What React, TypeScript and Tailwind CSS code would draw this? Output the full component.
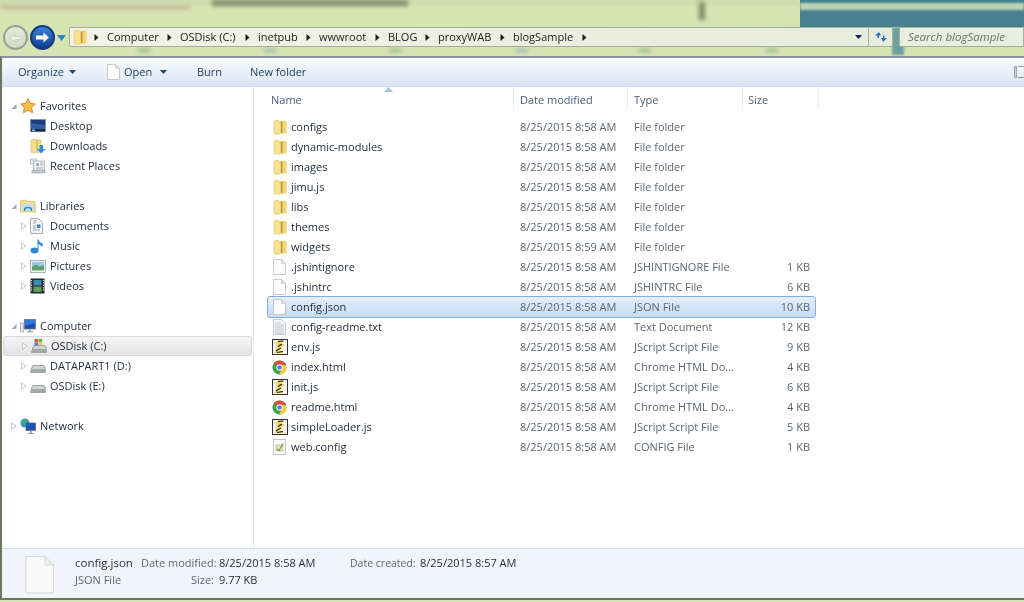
import React from 'react';

const FONT = "font-['Open_Sans',sans-serif]";

const FolderIcon = () => (
  <svg width="14" height="16" viewBox="0 0 14 16" className="shrink-0">
    <path d="M1 2 L4.5 1 L5 2 L12.5 2 Q13.5 2 13.5 3 L13.5 13.5 Q13.5 14.5 12.5 14.5 L7 14.5 L7 2.5 Z" fill="#eccb62" />
    <path d="M1 3 Q1 2 2 2 L5 1.2 L7.5 3.5 L8 13.5 Q8 15 6.5 15 L2 15 Q1 15 1 14 Z" fill="#f6e28f" stroke="#e0bc55" strokeWidth="0.5" />
    <path d="M8.7 3 L8.7 14" stroke="#b8923a" strokeWidth="1.2" />
    <path d="M10 3 L13 3 L13 14 L10 14 Z" fill="#f3d778" />
  </svg>
);

const FileIcon = ({ w = 13, h = 16 }: { w?: number; h?: number }) => (
  <svg width={w} height={h} viewBox="0 0 13 16" className="shrink-0">
    <path d="M0.5 0.5 L8.5 0.5 L12.5 4.5 L12.5 15.5 L0.5 15.5 Z" fill="#fdfdfd" stroke="#b5b5b5" strokeWidth="0.7" />
    <path d="M8.5 0.5 L8.5 4.5 L12.5 4.5 Z" fill="#e6e6e6" stroke="#b5b5b5" strokeWidth="0.5" />
  </svg>
);

const BigFileIcon = () => (
  <svg width="29" height="38" viewBox="0 0 29 38" className="shrink-0">
    <path d="M1 0.5 L20 0.5 L28.5 9 L28.5 37 L1 37 Z" fill="#f9f9f9" stroke="#d6d6d6" strokeWidth="1" />
    <path d="M20 0.5 L20 9 L28.5 9 Z" fill="#ececec" stroke="#cfcfcf" strokeWidth="0.7" />
  </svg>
);

const TextFileIcon = () => (
  <svg width="13" height="16" viewBox="0 0 13 16" className="shrink-0">
    <path d="M0.5 0.5 L8.5 0.5 L12.5 4.5 L12.5 15.5 L0.5 15.5 Z" fill="#f4f6f8" stroke="#b5b5b5" strokeWidth="0.7" />
    <path d="M2 4 H8 M2 6 H11 M2 8 H11 M2 10 H11 M2 12 H11 M2 14 H11" stroke="#b9c4d0" strokeWidth="0.9" />
  </svg>
);

const ScriptIcon = () => (
  <svg width="16" height="16" viewBox="0 0 16 16" className="shrink-0">
    <rect x="0.5" y="0.5" width="15" height="15" fill="#f5f5ee" stroke="#333" />
    <path d="M11 2.5 L6 3 L5.5 5 L10 6.5 L5 9 L4.5 13 L10.5 13" fill="none" stroke="#f2d94e" strokeWidth="2.6" />
    <path d="M11.5 2 L6 2.5 M10 5 L6 7.5 M9 9 L4 12 M11 12.5 L5 13.5" stroke="#1c1c1c" strokeWidth="1.2" />
  </svg>
);

const ChromeIcon = () => (
  <svg width="15" height="15" viewBox="0 0 16 16" className="shrink-0">
    <circle cx="8" cy="8" r="7.5" fill="#3ba64a" />
    <path d="M8 0.5 A7.5 7.5 0 0 1 15 6 L8 6 A2.5 2.5 0 0 0 5.5 7.5 L2.2 3.2 A7.5 7.5 0 0 1 8 0.5 Z" fill="#dd4b3e" />
    <path d="M15 5.5 A7.5 7.5 0 0 1 7.5 15.5 L10.5 9.5 L10 5.5 Z" fill="#f7cc3f" />
    <circle cx="8" cy="8" r="3.4" fill="#fff" />
    <circle cx="8" cy="8" r="2.5" fill="#4a84d8" />
  </svg>
);

const ConfigIcon = () => (
  <svg width="13" height="16" viewBox="0 0 13 16" className="shrink-0">
    <rect x="0.5" y="0.5" width="12" height="15" fill="#fafafa" stroke="#b0b0b0" strokeWidth="0.7" />
    <rect x="3" y="6" width="7" height="6" fill="#e8e4b8" stroke="#9a9a80" strokeWidth="0.5" />
    <path d="M4 10 L6 11.5 L10 4.5" fill="none" stroke="#6aa53c" strokeWidth="1.2" />
  </svg>
);

const StarIcon = () => (
  <svg width="16" height="16" viewBox="0 0 16 16" className="shrink-0">
    <path d="M8 0.8 L10.2 5.4 L15.4 6 L11.6 9.5 L12.6 14.8 L8 12.2 L3.4 14.8 L4.4 9.5 L0.6 6 L5.8 5.4 Z" fill="#f8c04a" stroke="#dd7f22" strokeWidth="0.9" />
  </svg>
);

const DesktopIcon = () => (
  <svg width="16" height="14" viewBox="0 0 16 14" className="shrink-0">
    <rect x="0.5" y="0.5" width="15" height="12" fill="#2d5fa8" stroke="#7a8a9a" strokeWidth="0.7" />
    <path d="M1 1 H15 V6 L1 4 Z" fill="#1d3f7c" />
    <rect x="1" y="10" width="14" height="2.5" fill="#1b2a3f" />
    <rect x="2" y="10.5" width="3" height="1.5" fill="#7fc4ea" />
  </svg>
);

const DownloadsIcon = () => (
  <svg width="16" height="16" viewBox="0 0 16 16" className="shrink-0">
    <path d="M1 2 L5 1 L5.5 2 L11 2 L11 14 L2 15 L1 14 Z" fill="#f4df90" stroke="#d8b654" strokeWidth="0.6" />
    <path d="M7 1.5 L7 14" stroke="#c9a23f" />
    <path d="M9.5 7 L13 7 L13 11 L15.5 11 L11.2 15.5 L7 11 L9.5 11 Z" fill="#2f8fdc" />
  </svg>
);

const RecentIcon = () => (
  <svg width="16" height="16" viewBox="0 0 16 16" className="shrink-0">
    <rect x="0.5" y="1" width="6" height="5" fill="#e4e8ec" stroke="#9aa3ac" strokeWidth="0.6" />
    <rect x="3.5" y="3" width="11" height="9" fill="#eef1f4" stroke="#98a0a8" strokeWidth="0.7" />
    <rect x="6" y="5" width="3" height="3" fill="#8fb8d8" />
    <path d="M10 5 H13 M10 7 H13 M6 10 H13" stroke="#a8b0b8" />
    <rect x="2" y="12.5" width="13" height="2.5" fill="#c4c8cc" stroke="#8e959c" strokeWidth="0.5" />
  </svg>
);

const LibrariesIcon = () => (
  <svg width="16" height="14" viewBox="0 0 16 14" className="shrink-0">
    <path d="M0.5 2 L5.5 1 L6.5 2.5 L15 2.5 L15.5 13 L0.5 13 Z" fill="#f4df90" stroke="#d6b655" strokeWidth="0.7" />
    <rect x="2" y="5" width="12" height="7" fill="#bfe0f5" />
    <path d="M4 12 L4 9 Q8 6.5 12 9 L12 12 L10.5 12 L10.5 10 Q8 8.7 5.5 10 L5.5 12 Z" fill="#3b88c7" />
  </svg>
);

const DocumentsIcon = () => (
  <svg width="13" height="16" viewBox="0 0 13 16" className="shrink-0">
    <path d="M0.5 0.5 L8.5 0.5 L12.5 4.5 L12.5 15.5 L0.5 15.5 Z" fill="#f3f5f8" stroke="#8f99a5" strokeWidth="0.8" />
    <path d="M3 3 H7 M3 5 H6 M3 8 H6 M3 10 H6 M3 12 H10" stroke="#9aa4ae" />
    <rect x="7" y="6.5" width="3.5" height="3.5" fill="#4a84c0" />
  </svg>
);

const MusicIcon = () => (
  <svg width="14" height="16" viewBox="0 0 14 16" className="shrink-0">
    <ellipse cx="4.5" cy="12.5" rx="4" ry="3" fill="#2f86d6" />
    <path d="M7.5 12 L7.5 0.5 Q9 4 13 6 Q12.5 8 12 9 Q10 6.5 8.5 6 L8.5 12 Z" fill="#2f86d6" />
  </svg>
);

const PicturesIcon = () => (
  <svg width="16" height="13" viewBox="0 0 16 13" className="shrink-0">
    <rect x="0.5" y="0.5" width="15" height="12" fill="#eef0f1" stroke="#8d949a" strokeWidth="0.7" />
    <rect x="2" y="2" width="12" height="4.5" fill="#9cc9e8" />
    <path d="M2 6.5 L6 4.5 L10 6.5 L14 5 L14 10.5 L2 10.5 Z" fill="#5fa06a" />
  </svg>
);

const VideosIcon = () => (
  <svg width="15" height="16" viewBox="0 0 15 16" className="shrink-0">
    <rect x="0.5" y="0.5" width="14" height="15" fill="#1f2a30" />
    <rect x="3.5" y="2" width="8" height="5.5" fill="#3d8fb5" />
    <rect x="3.5" y="8.5" width="8" height="5.5" fill="#5e9e55" />
    <path d="M1.5 2 V14 M13.5 2 V14" stroke="#d8dde0" strokeWidth="1.2" strokeDasharray="1.2 1.2" />
  </svg>
);

const ComputerIcon = () => (
  <svg width="16" height="15" viewBox="0 0 16 15" className="shrink-0">
    <rect x="0.5" y="4" width="3" height="9" fill="#e5e8ea" stroke="#8d959c" strokeWidth="0.6" />
    <rect x="4.5" y="0.5" width="11" height="9.5" fill="#1c50b4" stroke="#6d7780" strokeWidth="0.8" />
    <path d="M5 1 H15 V4 L5 7 Z" fill="#2f7bdc" />
    <path d="M9 10 H11 V12 H13 V13.5 H7 V12 H9 Z" fill="#a8afb5" />
  </svg>
);

const DiskIcon = ({ windows = false }: { windows?: boolean }) => (
  <svg width="16" height="16" viewBox="0 0 16 16" className="shrink-0">
    <path d="M2 9 Q2 7.5 4 7.5 L12 7.5 Q14.5 7.5 15 9 L15.5 14.5 L0.5 14.5 Z" fill="#d2d5d7" stroke="#7c8287" strokeWidth="0.7" />
    <rect x="1" y="11" width="14" height="3.5" fill="#a4a9ad" />
    <rect x="12" y="11.8" width="2" height="1.5" fill="#62c04e" />
    {windows && (
      <g>
        <rect x="3.5" y="1" width="3.6" height="3" fill="#e0552e" />
        <rect x="7.6" y="1" width="3.6" height="3" fill="#6ab43c" />
        <rect x="3.5" y="4.4" width="3.6" height="3" fill="#3a86d6" />
        <rect x="7.6" y="4.4" width="3.6" height="3" fill="#f2c230" />
      </g>
    )}
  </svg>
);

const NetworkIcon = () => (
  <svg width="16" height="16" viewBox="0 0 16 16" className="shrink-0">
    <circle cx="5" cy="5" r="4.5" fill="#2f9ad6" />
    <path d="M2 3 L5 1.5 L7 3.5 L5 6 L2.5 5.5 Z" fill="#4fb04a" />
    <rect x="6" y="5" width="9.5" height="7.5" fill="#1d52b6" stroke="#5e6a75" strokeWidth="0.8" />
    <path d="M10 12.5 H11.5 V15 H10 Z M7.5 15 H14 V15.8 H7.5 Z" fill="#7c858c" />
  </svg>
);

const Crumb = () => (
  <svg width="5" height="7" viewBox="0 0 5 7" className="shrink-0">
    <path d="M0.5 0 L4.5 3.5 L0.5 7 Z" fill="#1a1a1a" />
  </svg>
);

const Caret = ({ color = '#2c4668' }: { color?: string }) => (
  <svg width="7" height="4" viewBox="0 0 7 4" className="shrink-0">
    <path d="M0 0 H7 L3.5 4 Z" fill={color} />
  </svg>
);

const Expander = ({ open, show = true }: { open?: boolean; show?: boolean }) => (
  <span className="w-[6px] h-[8px] shrink-0 flex items-center">
    {show && (
      <svg width="6" height="8" viewBox="0 0 6 8">
        {open ? <path d="M0.5 7 L5.5 7 L5.5 2 Z" fill="#a6a6a6" /> : <path d="M0.7 0.7 L5 4 L0.7 7.3 Z" fill="#fff" stroke="#b4b4b4" strokeWidth="0.8" />}
      </svg>
    )}
  </span>
);

type NavItem = { label: string; icon: React.ReactNode; top?: boolean; open?: boolean; leaf?: boolean; active?: boolean; gap?: boolean };

const NAV: NavItem[] = [
  { label: 'Favorites', icon: <StarIcon />, top: true, open: true },
  { label: 'Desktop', icon: <DesktopIcon />, leaf: true },
  { label: 'Downloads', icon: <DownloadsIcon />, leaf: true },
  { label: 'Recent Places', icon: <RecentIcon />, leaf: true },
  { label: 'Libraries', icon: <LibrariesIcon />, top: true, open: true, gap: true },
  { label: 'Documents', icon: <DocumentsIcon /> },
  { label: 'Music', icon: <MusicIcon /> },
  { label: 'Pictures', icon: <PicturesIcon /> },
  { label: 'Videos', icon: <VideosIcon /> },
  { label: 'Computer', icon: <ComputerIcon />, top: true, open: true, gap: true },
  { label: 'OSDisk (C:)', icon: <DiskIcon windows />, active: true },
  { label: 'DATAPART1 (D:)', icon: <DiskIcon /> },
  { label: 'OSDisk (E:)', icon: <DiskIcon /> },
  { label: 'Network', icon: <NetworkIcon />, top: true, gap: true },
];

const F = '8/25/2015 8:58 AM';
const FILES = [
  { name: 'configs', date: F, type: 'File folder', size: '', icon: <FolderIcon /> },
  { name: 'dynamic-modules', date: F, type: 'File folder', size: '', icon: <FolderIcon /> },
  { name: 'images', date: F, type: 'File folder', size: '', icon: <FolderIcon /> },
  { name: 'jimu.js', date: F, type: 'File folder', size: '', icon: <FolderIcon /> },
  { name: 'libs', date: F, type: 'File folder', size: '', icon: <FolderIcon /> },
  { name: 'themes', date: F, type: 'File folder', size: '', icon: <FolderIcon /> },
  { name: 'widgets', date: '8/25/2015 8:59 AM', type: 'File folder', size: '', icon: <FolderIcon /> },
  { name: '.jshintignore', date: F, type: 'JSHINTIGNORE File', size: '1 KB', icon: <FileIcon /> },
  { name: '.jshintrc', date: F, type: 'JSHINTRC File', size: '6 KB', icon: <FileIcon /> },
  { name: 'config.json', date: F, type: 'JSON File', size: '10 KB', icon: <FileIcon />, selected: true },
  { name: 'config-readme.txt', date: F, type: 'Text Document', size: '12 KB', icon: <TextFileIcon /> },
  { name: 'env.js', date: F, type: 'JScript Script File', size: '9 KB', icon: <ScriptIcon /> },
  { name: 'index.html', date: F, type: 'Chrome HTML Do...', size: '4 KB', icon: <ChromeIcon /> },
  { name: 'init.js', date: F, type: 'JScript Script File', size: '6 KB', icon: <ScriptIcon /> },
  { name: 'readme.html', date: F, type: 'Chrome HTML Do...', size: '4 KB', icon: <ChromeIcon /> },
  { name: 'simpleLoader.js', date: F, type: 'JScript Script File', size: '5 KB', icon: <ScriptIcon /> },
  { name: 'web.config', date: F, type: 'CONFIG File', size: '1 KB', icon: <ConfigIcon /> },
];

const PATH = [
  { label: 'Computer', w: 'w-[57px]' },
  { label: 'OSDisk (C:)', w: 'w-[62px]' },
  { label: 'inetpub', w: 'w-[45px]' },
  { label: 'wwwroot', w: 'w-[53px]' },
  { label: 'BLOG', w: 'w-[34px]' },
  { label: 'proxyWAB', w: 'w-[59px]' },
  { label: 'blogSample', w: 'w-[66px]' },
];

const HEADERS = [
  { label: 'Name', w: 'w-[246px] pl-[3px]' },
  { label: 'Date modified', w: 'w-[114px] pl-[6px]' },
  { label: 'Type', w: 'w-[115px] pl-[6px]' },
  { label: 'Size', w: 'w-[76px] pl-[5px]' },
];

export default function App() {
  return (
    <div className={`${FONT} relative w-[1024px] h-[602px] overflow-hidden bg-[#d6e4b4] text-[11px] leading-[16px] blur-[0.35px]`}>
      {/* blurred desktop behind the window */}
      <div className="absolute left-0 top-[5px] w-[190px] h-[4px] bg-[#c2b091] blur-[2px]" />
      <div className="absolute left-0 top-0 w-[800px] h-[4px] bg-[#c9d6ab] blur-[2px]" />
      <div className="absolute left-[212px] top-0 w-[196px] h-[6px] bg-[#868a6c] blur-[2px]" />
      <div className="absolute left-[699px] top-[2px] w-[6px] h-[18px] bg-[#7f8a68] blur-[2px]" />
      <div className="absolute left-[800px] top-0 right-0 h-[27px] bg-[#47808f]" />
      <div className="absolute left-[800px] top-[3px] right-0 h-[7px] bg-[#bcd3b4] blur-[1px]" />
      <div className="absolute left-[892px] top-[27px] w-[12px] h-[28px] bg-[#6d9fa3] blur-[1px]" />
      <div className="absolute left-[138px] top-[49px] w-[12px] h-[3px] bg-[#8fb08c] blur-[2px]" />
      <div className="absolute left-[264px] top-[49px] w-[12px] h-[3px] bg-[#8fb3ac] blur-[2px]" />
      <div className="absolute left-[389px] top-[49px] w-[12px] h-[3px] bg-[#8fb08c] blur-[2px]" />
      <div className="absolute left-[516px] top-[49px] w-[12px] h-[3px] bg-[#8fb3ac] blur-[2px]" />
      <div className="absolute left-[639px] top-[49px] w-[12px] h-[3px] bg-[#8fb08c] blur-[2px]" />
      <div className="absolute left-[766px] top-[49px] w-[12px] h-[3px] bg-[#8fb08c] blur-[2px]" />

      <div className="relative flex flex-col h-[600px]">
        {/* nav + address bar */}
        <div className="h-[56px] flex items-start pt-[25px] pl-[3px] shrink-0">
          <div className="w-[25px] h-[25px] rounded-full bg-gradient-to-b from-[#e4e9da] to-[#d2d9c6] border-[2px] border-[#9aa192] flex items-center justify-center shrink-0">
            <svg width="14" height="10" viewBox="0 0 14 10"><path d="M1 5 L6 1 V3.5 H13 V6.5 H6 V9 Z" fill="#eef1e6" stroke="#c3c8bb" strokeWidth="0.7" /></svg>
          </div>
          <div className="w-[25px] h-[25px] ml-[2px] rounded-full bg-gradient-to-b from-[#3b82d6] to-[#0f3f94] border-[2px] border-[#123a7c] flex items-center justify-center shrink-0">
            <svg width="15" height="11" viewBox="0 0 15 11"><path d="M14 5.5 L8.5 0.5 V3.5 H1 V7.5 H8.5 V10.5 Z" fill="#fff" /></svg>
          </div>
          <div className="mt-[10px] ml-[2px] w-[9px] shrink-0">
            <svg width="9" height="6" viewBox="0 0 9 6"><path d="M0 0 H9 L4.5 6 Z" fill="#2b86c8" /></svg>
          </div>
          <div className="ml-[3px] w-[824px] h-[20px] mt-[2px] flex items-center bg-gradient-to-r from-[#f1f3e6] to-[#e8ecdc] border border-[#a9ad98] rounded-[2px] shrink-0">
            <div className="ml-[3px] w-[18px]"><FolderIcon /></div>
            {PATH.map((p) => (
              <React.Fragment key={p.label}>
                <span className="w-[11px] flex justify-center"><Crumb /></span>
                <span className={`${p.w} ml-[5px] text-[#222] whitespace-nowrap`}>{p.label}</span>
              </React.Fragment>
            ))}
            <span className="w-[11px] flex justify-center"><Crumb /></span>
            <span className="ml-auto mr-[6px]"><Caret color="#16186a" /></span>
            <span className="w-[24px] h-full border-l border-[#a9ad98] flex items-center justify-center">
              <svg width="14" height="12" viewBox="0 0 14 12"><path d="M5 1 L1 4.5 H3.5 V7 H5 V4.5 H7 Z M9 11 L13 7 H10.5 V4.5 H9 V7 H7 Z" fill="#2a6fc0" /></svg>
            </span>
          </div>
          <div className="ml-[6px] flex-1 h-[20px] mt-[2px] flex items-center pl-[8px] bg-[#e9eee0] border border-[#a9ad98] rounded-l-[2px] italic text-[#6d6f68] text-[11.5px] whitespace-nowrap">
            Search blogSample
          </div>
        </div>

        {/* window */}
        <div className="flex-1 min-h-0 flex flex-col border-l-[2px] border-t-[2px] border-b-[2px] border-t-[#8f93a0] border-l-[#6e7560] border-b-[#6e7560] bg-white">
          <div className="h-[29px] shrink-0 flex items-center bg-gradient-to-b from-[#fbfcfe] via-[#e9f0f9] to-[#dae4f1] border-b border-[#cfdcea] text-[#1e395b]">
            <span className="ml-[16px] w-[51px]">Organize</span>
            <Caret />
            <span className="ml-[31px]"><FileIcon w={13} h={16} /></span>
            <span className="ml-[4px] w-[36px]">Open</span>
            <Caret />
            <span className="ml-[30px] w-[53px]">Burn</span>
            <span>New folder</span>
            <div className="ml-auto w-[10px] h-[12px] flex gap-[1px]">
              <div className="w-[3px] h-full bg-[#c9cdd2] border border-[#9ea5ad]" />
              <div className="w-[6px] h-full border-y border-[#8e97a3]" />
            </div>
          </div>

          <div className="flex-1 min-h-0 flex">
            {/* nav pane */}
            <div className="w-[252px] shrink-0 border-r border-[#e2eaf3] pt-[9px] pr-[1px] text-[#1f2a38]">
              {NAV.map((item) => (
                <div
                  key={item.label}
                  className={`h-[20px] flex items-center ml-[1px] ${item.gap ? 'mt-[20px]' : ''} ${item.active ? 'bg-gradient-to-b from-[#f4f4f4] to-[#e4e4e4] border border-[#d8d8d8] rounded-[3px]' : ''}`}
                >
                  <span className={item.top ? 'ml-[8px]' : 'ml-[18px]'}>
                    <Expander open={item.open} show={!item.leaf} />
                  </span>
                  <span className="ml-[3px] w-[20px] flex">{item.icon}</span>
                  <span className="whitespace-nowrap">{item.label}</span>
                </div>
              ))}
            </div>

            {/* file list */}
            <div className="flex-1 min-w-0 relative pl-[14px]">
              <svg width="9" height="5" viewBox="0 0 9 5" className="absolute left-[130px] top-0"><path d="M0 5 L4.5 0 L9 5 Z" fill="#9fc3e6" /></svg>
              <div className="h-[23px] flex text-[#4c607a]">
                {HEADERS.map((h) => (
                  <div key={h.label} className={`${h.w} pt-[5px] border-r border-[#e4ecf5]`}>
                    {h.label}
                  </div>
                ))}
              </div>
              <div className="pt-[7px]">
                {FILES.map((f) => (
                  <div
                    key={f.name}
                    className={`h-[20px] w-[547px] flex items-center rounded-[2px] ${f.selected ? 'bg-gradient-to-b from-[#e5f0fb] to-[#c6dcf3] outline outline-[1px] outline-[#84acdd]' : ''}`}
                  >
                    <span className="w-[23px] flex justify-center shrink-0">{f.icon}</span>
                    <span className="w-[229px] text-[#1f2a38] whitespace-nowrap">{f.name}</span>
                    <span className="w-[114px] text-[#5c6670] whitespace-nowrap">{f.date}</span>
                    <span className="w-[114px] text-[#5c6670] whitespace-nowrap">{f.type}</span>
                    <span className="w-[62px] text-right text-[#5c6670] whitespace-nowrap">{f.size}</span>
                  </div>
                ))}
              </div>
            </div>
          </div>

          {/* details pane */}
          <div className="h-[50px] shrink-0 flex bg-[#f1f5fb] border-t border-[#d5dfe9]">
            <div className="ml-[23px] mt-[7px] shrink-0"><BigFileIcon /></div>
            <div className="ml-[21px] mt-[6px] flex flex-col gap-[1px] shrink-0 w-[66px]">
              <span className="text-[#1f2a38] text-[11.5px] whitespace-nowrap">config.json</span>
              <span className="text-[#5a6779] whitespace-nowrap">JSON File</span>
            </div>
            <div className="mt-[6px] grid grid-cols-[78px_131px] content-start gap-y-[1px] shrink-0 whitespace-nowrap">
              <span className="text-[#5a6779] text-right pr-[5px]">Date modified:</span>
              <span className="text-[#1f2a38]">8/25/2015 8:58 AM</span>
              <span className="text-[#5a6779] text-right pr-[5px]">Size:</span>
              <span className="text-[#1f2a38]">9.77 KB</span>
            </div>
            <div className="mt-[6px] flex h-[16px] whitespace-nowrap">
              <span className="w-[70px] text-[10.5px] text-[#5a6779]">Date created:</span>
              <span className="text-[#1f2a38]">8/25/2015 8:57 AM</span>
            </div>
          </div>
        </div>
      </div>
    </div>
  );
}
